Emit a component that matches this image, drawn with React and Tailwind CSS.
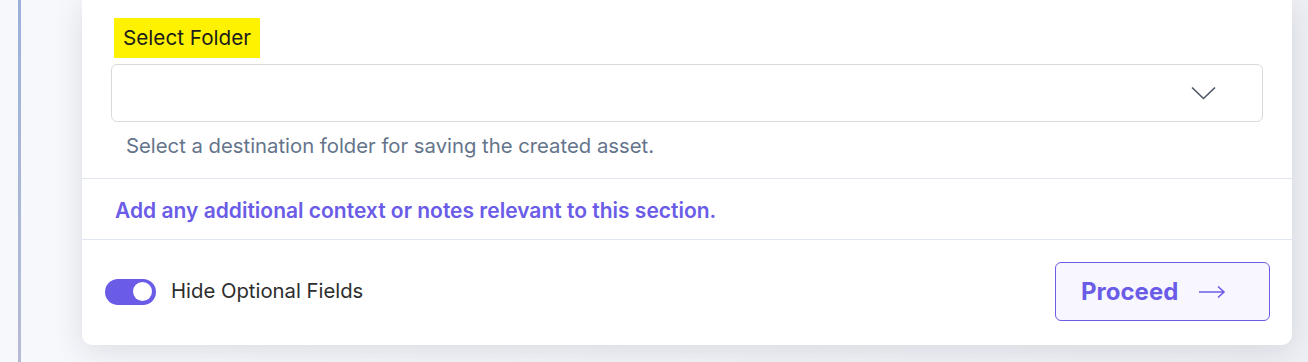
import React from "react";

export default function App() {
  return (
    <div
      className="flex h-[362px] w-full overflow-hidden bg-[#f6f8fc]"
      style={{ fontFamily: "Inter, 'Noto Sans', sans-serif" }}
    >
      <div className="w-[18px] shrink-0 bg-[#f6f8fc]" />
      <div className="w-[3px] shrink-0 bg-gradient-to-b from-[#9bb1db] to-[#b6bbd5]" />
      <div className="flex flex-1 bg-gradient-to-r from-[#f6f8fc] to-[#eef0f5] pl-[61px] pr-[16px]">
        <div className="flex h-[345px] w-[1210px] flex-col rounded-b-[10px] bg-white shadow-[0_6px_30px_rgba(30,35,60,0.12)]">
          <div className="flex flex-col px-[29px] pt-[18px]">
            <div className="ml-[3px] flex h-[40px] w-fit items-center bg-[#fff200] px-[9px] text-[20.7px] text-[#1c1c1c]">
              Select Folder
            </div>
            <div className="mt-[6px] flex h-[58px] items-center justify-end rounded-[6px] border border-[#dadada] pr-[46px]">
              <svg width="25" height="14" viewBox="0 0 25 14" fill="none">
                <path d="M1 1.5 L12.5 12.5 L24 1.5" stroke="#4b5563" strokeWidth="1.6" />
              </svg>
            </div>
            <div className="mt-[10px] pl-[15px] text-[20.3px] leading-[28px] text-[#64748b]">
              Select a destination folder for saving the created asset.
            </div>
          </div>
          <div className="mt-[18px] h-px bg-[#e0e6f1]" />
          <div className="flex h-[60px] items-center pl-[33px] pt-[3px] text-[21px] font-semibold text-[#6b5ce7]">
            Add any additional context or notes relevant to this section.
          </div>
          <div className="h-px bg-[#e0e6f1]" />
          <div className="flex flex-1 items-center justify-between pb-[2px] pl-[23px] pr-[22px]">
            <div className="flex items-center gap-[15px]">
              <div className="flex h-[26px] w-[51px] items-center justify-end rounded-full bg-[#6b5ce7] pr-[4px]">
                <div className="h-[19px] w-[19px] rounded-full bg-white" />
              </div>
              <span className="text-[20.3px] text-[#2d2d2d]">Hide Optional Fields</span>
            </div>
            <button className="flex h-[59px] w-[215px] items-center rounded-[6px] border border-[#6b5ce7] bg-[#f8f7ff] pl-[25px] text-[24px] font-bold text-[#6b5ce7]">
              Proceed
              <svg className="ml-[21px]" width="27" height="14" viewBox="0 0 27 14" fill="none">
                <path d="M0 7 H25 M19 1.5 L25 7 L19 12.5" stroke="#6b5ce7" strokeWidth="1.6" />
              </svg>
            </button>
          </div>
        </div>
      </div>
    </div>
  );
}
